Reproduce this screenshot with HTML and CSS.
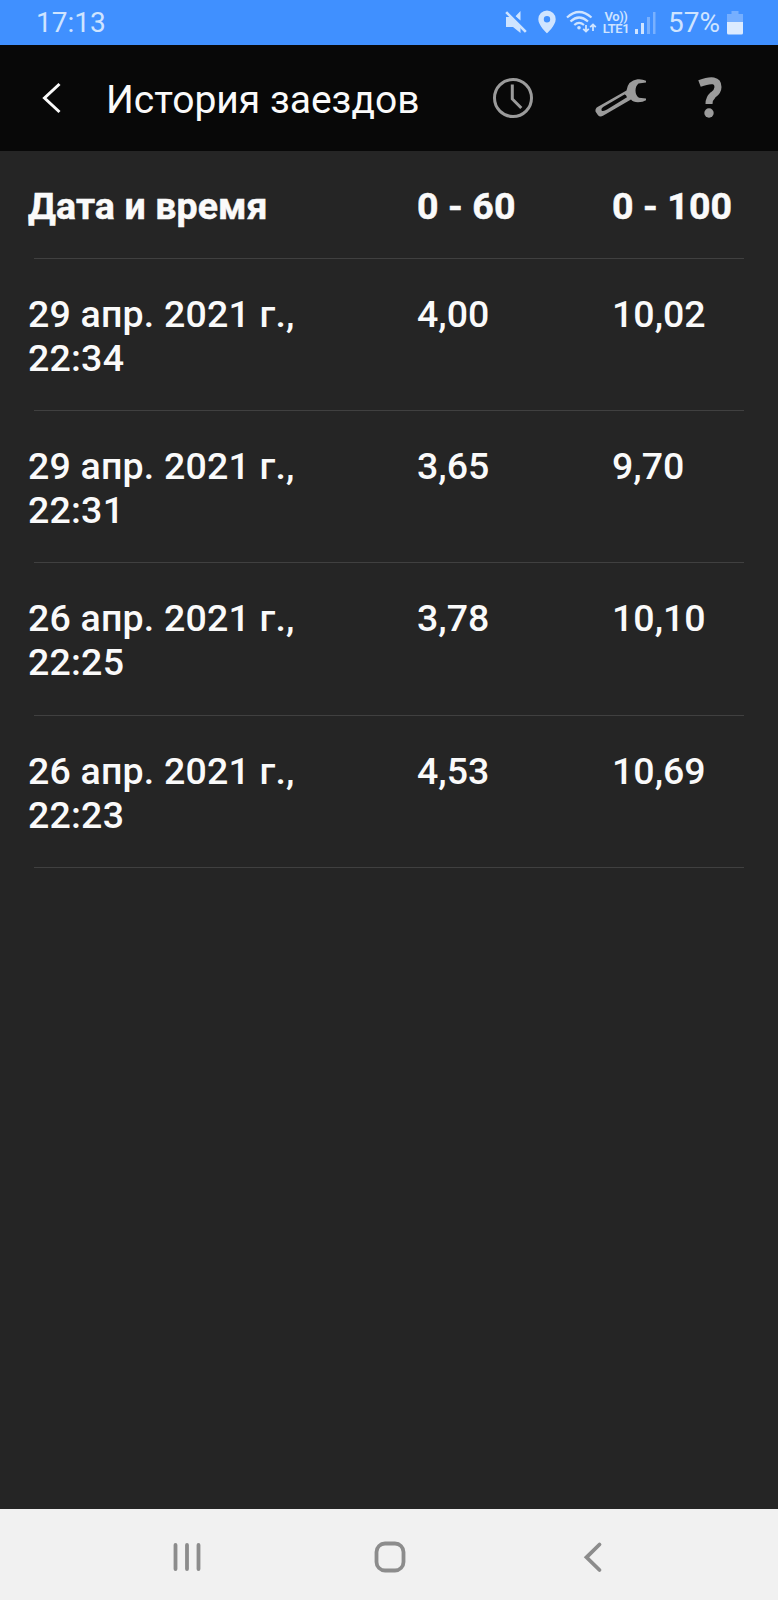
FILE: index.html
```html
<!DOCTYPE html>
<html lang="ru">
<head>
    <meta charset="UTF-8">
    <meta name="viewport" content="width=device-width, initial-scale=1.0">
    <title>История заездов</title>
    <link rel="stylesheet" href="styles.css">
</head>
<body>
    <div class="status">
        <span class="time">17:13</span>
        <svg class="mute" width="22" height="24" viewBox="0 0 22 24">
            <path d="M1 7H5L15.500 17V23L8 17H1zM10.500 6.200L15.500 1v9.500z" fill="#cfe4ff"/>
            <path d="M3 .5L22 19.500" stroke="#4090ff" stroke-width="2"/>
            <path d="M1.200 2.200L20.800 21.800" stroke="#cfe4ff" stroke-width="2.600"/>
        </svg>
        <svg class="pin" width="18" height="24" viewBox="0 0 18 24">
            <path d="M9 .5a8.700 8.700 0 0 0-8.700 8.700C.3 15.500 9 23.300 9 23.300s8.700-7.800 8.700-14.100A8.700 8.700 0 0 0 9 .5zM9 6a3.200 3.200 0 1 1 0 6.400A3.200 3.200 0 0 1 9 6z" fill="#cfe4ff" fill-rule="evenodd"/>
        </svg>
        <svg class="wifi" width="31" height="24" viewBox="0 0 31 24" fill="none" stroke="#cfe4ff" stroke-width="2.200">
            <path d="M1 7.500Q13 -3.500 25.500 7.500M4.500 11.500Q13 3.500 22 11.500M8.300 15Q13 10.800 18 15"/>
            <circle cx="13" cy="17.700" r="1.800" fill="#cfe4ff" stroke="none"/>
            <path d="M20 15v6M17.200 18.800l2.800 2.800 2.800-2.800M27 21v-6M24.200 17.200l2.800-2.800 2.800 2.800" stroke-width="1.800"/>
        </svg>
        <div class="lte"><span>Vo))</span><span>LTE1</span></div>
        <svg class="signal" width="21" height="22" viewBox="0 0 21 22" fill="#cfe4ff">
            <path d="M0 17h3v5H0zM6 11h3v11H6z"/>
            <path d="M12 5h3v17h-3zM18 0h2.500v22H18z" opacity=".4"/>
        </svg>
        <span class="percent">57%</span>
        <svg class="battery" width="16" height="24" viewBox="0 0 16 24" fill="#dcebff">
            <path d="M4.500 0h7v3H16v8H0V3h4.500z" opacity=".35"/>
            <path d="M0 11h16v11q0 1.500-1.500 1.500h-13Q0 23.500 0 22z"/>
        </svg>
    </div>

    <div class="header">
        <svg class="back" width="20" height="32" viewBox="0 0 20 32">
            <path d="M17.500 2L2.500 16l15 14" fill="none" stroke="#fafafa" stroke-width="3"/>
        </svg>
        <h1 class="title">История заездов</h1>
        <svg class="clock" width="42" height="42" viewBox="0 0 42 42" fill="none" stroke="#9b9b9b">
            <circle cx="21" cy="21" r="18.500" stroke-width="3"/>
            <path d="M20.300 7.500v14.500l9 9" stroke-width="3"/>
        </svg>
        <svg class="wrench" width="54" height="40" viewBox="0 0 54 40">
            <path d="M32.500 12.500L3.500 29Q1 30.500 1.500 33.500L4 37.200Q6 39.500 9 37.800L37 21.500Q39 24.200 44 24.200 49 24.200 52 22.200V20.500L45 19.800Q41.500 17.500 41.500 12.500 41.500 8 44.500 5.500L52 4.500V2.800Q48 .8 43.500 1.300 34 2.500 32.500 12.500zM30.500 16.500Q32 16.200 33 19.200L13 31.500Q10 33.500 7.700 32.700 6.800 30.500 9.500 28.800z" fill="#9b9b9b" fill-rule="evenodd"/>
        </svg>
        <svg class="help" width="24" height="42" viewBox="0 0 24 42">
            <path d="M1.500 6.500Q20-.5 20 10 20 14.500 15 18 11 21.500 11 27" fill="none" stroke="#9b9b9b" stroke-width="7"/>
            <circle cx="11" cy="36" r="4.700" fill="#9b9b9b"/>
        </svg>
    </div>

    <div class="runs">
        <div class="row head">
            <span>Дата и время</span>
            <span>0 - 60</span>
            <span>0 - 100</span>
        </div>
        <div class="row">
            <span class="date">29 апр. 2021 г.,<br>22:34</span>
            <span>4,00</span>
            <span>10,02</span>
        </div>
        <div class="row">
            <span class="date">29 апр. 2021 г.,<br>22:31</span>
            <span>3,65</span>
            <span>9,70</span>
        </div>
        <div class="row">
            <span class="date">26 апр. 2021 г.,<br>22:25</span>
            <span>3,78</span>
            <span>10,10</span>
        </div>
        <div class="row">
            <span class="date">26 апр. 2021 г.,<br>22:23</span>
            <span>4,53</span>
            <span>10,69</span>
        </div>
    </div>

    <div class="nav">
        <svg width="32" height="32" viewBox="0 0 32 32">
            <path d="M4.500 4v24M16 4v24M27.500 4v24" stroke="#8c8c8c" stroke-width="3.800" stroke-linecap="round"/>
        </svg>
        <svg width="32" height="32" viewBox="0 0 32 32">
            <rect x="2.500" y="2.500" width="27" height="27" rx="8.500" fill="none" stroke="#8c8c8c" stroke-width="3.800"/>
        </svg>
        <svg width="32" height="32" viewBox="0 0 32 32">
            <path d="M22.500 3.500L9.500 16.300l13 12.700" fill="none" stroke="#8c8c8c" stroke-width="3.800" stroke-linecap="round"/>
        </svg>
    </div>
</body>
</html>
```

FILE: styles.css
```css
body {
    display: flex;
    flex-direction: column;
    height: 1600px;
    margin: 0;
    background-color: #252525;
    color: #fafafa;
    font-family: Roboto, sans-serif;
}

svg {
    display: block;
    flex-shrink: 0;
}

.status {
    display: flex;
    align-items: center;
    height: 45px;
    box-sizing: border-box;
    padding: 0 35px 0 36px;
    background-color: #4090ff;
    color: #cfe4ff;
}

.time, .percent {
    font-size: 28px;
    line-height: 45px;
}

.time {
    margin-right: auto;
}

.mute {
    margin-top: -2px;
}

.pin {
    margin-left: 11px;
    margin-top: -1px;
}

.wifi {
    margin-left: 10px;
    margin-top: -1px;
}

.lte {
    display: flex;
    flex-direction: column;
    align-items: center;
    width: 30px;
    margin-left: 4px;
    font-size: 13px;
    font-weight: 600;
    line-height: 12px;
    letter-spacing: -0.400px;
}

.signal {
    margin-left: 4px;
}

.percent {
    margin-left: 12px;
    width: 53px;
}

.battery {
    margin-left: 6px;
}

.header {
    display: flex;
    align-items: center;
    height: 106px;
    box-sizing: border-box;
    background-color: #080808;
}

.back {
    margin-left: 42px;
}

.title {
    width: 386px;
    margin: 4px 0 0 44px;
    font-size: 39px;
    font-weight: 400;
    white-space: nowrap;
}

.wrench {
    margin-left: 60px;
}

.help {
    margin-left: 50px;
}

.runs {
    flex: 1;
}

.row {
    display: grid;
    grid-template-columns: 389px 195px 1fr;
    padding: 33px 0 31px 28px;
    font-size: 37.500px;
    font-weight: 500;
    line-height: 44px;
    /* separator is inset from both edges */
    background: linear-gradient(#404040, #404040) 34px 100% / 710px 1px no-repeat;
}

.row + .row {
    padding-bottom: 31.200px;
}

.head {
    font-weight: 700;
    letter-spacing: 0.100px;
    -webkit-text-stroke: 0.500px #fafafa;
}

.date {
    letter-spacing: 0.200px;
}

.nav {
    display: flex;
    align-items: center;
    justify-content: center;
    gap: 171px;
    height: 91px;
    box-sizing: border-box;
    padding: 4px 0 0 2px;
    background-color: #f1f1f1;
}
```
